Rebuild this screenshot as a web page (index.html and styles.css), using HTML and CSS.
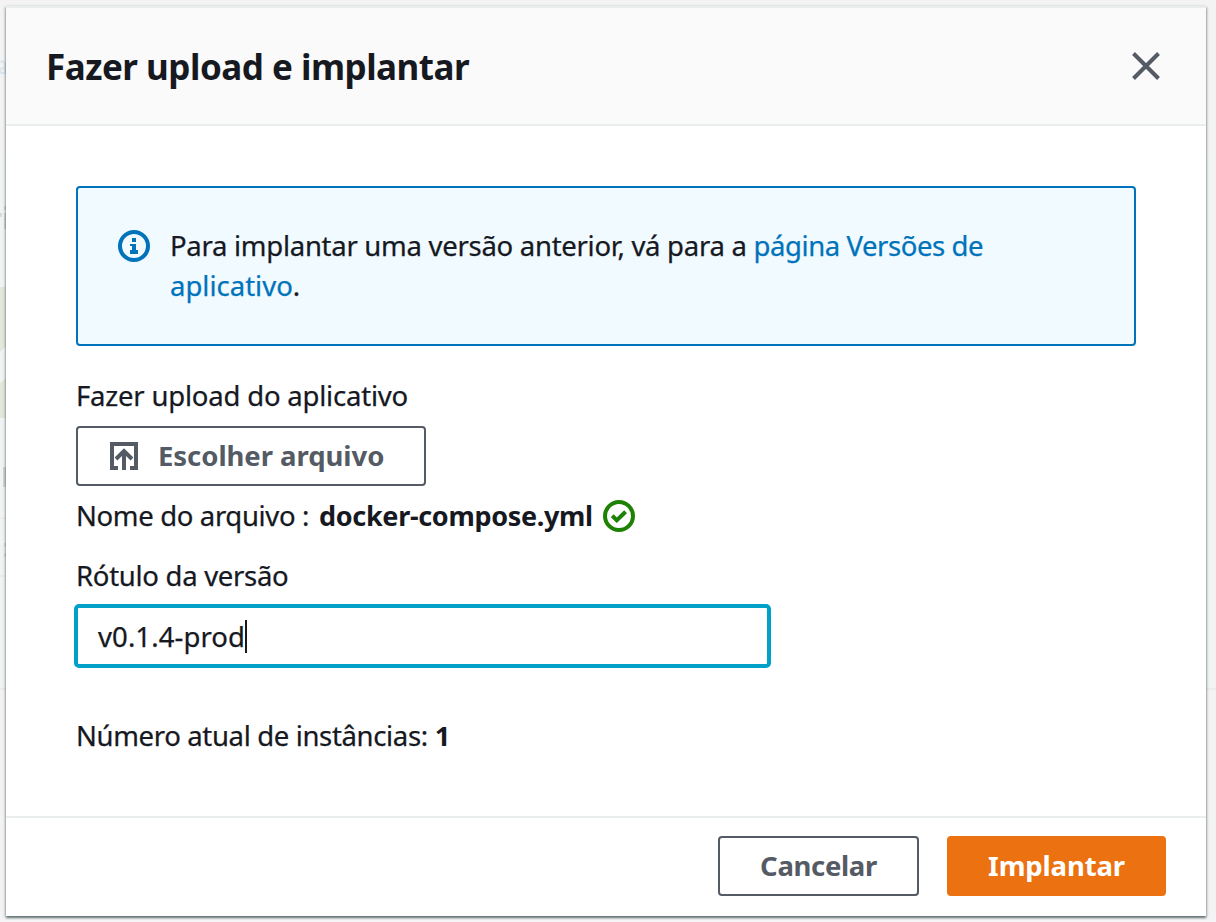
FILE: index.html
```html
<!DOCTYPE html>
<html lang="pt-BR">
<head>
<meta charset="utf-8">
<title>Fazer upload e implantar</title>
<link rel="stylesheet" href="styles.css">
</head>
<body>
<svg class="backdrop" viewBox="0 0 1216 922" aria-hidden="true">
  <rect y="156" width="1216" height="532" fill="#f2f4f4"/>
  <path d="M0 287h6v59l-6 6zM0 383l6-5v40H0z" fill="#e4e8db"/>
  <path d="M0 62q5-2 5 3v8H1q-3-5 4-5" fill="none" stroke="#dce5eb" stroke-width="2"/>
  <path d="M0 213h2v4H0zM4 206h2v4H4zM4 213h2v16H4z" fill="#d7d9da"/>
  <path d="M3 467h3v20H3z" fill="#d5d7d8"/>
  <path d="M0 518h6M0 576h6" stroke="#eeecec" stroke-width="2"/>
  <path d="M0 689h6M1206 689h10" stroke="#ebebeb" stroke-width="2"/>
  <path d="M4 543h2v4H4zM4 553h2v4H4z" fill="#dfdfe0"/>
</svg>
<main class="modal">
  <header class="modal-header">
    <h1 class="title">Fazer upload e implantar</h1>
    <svg class="close" viewBox="0 0 32 32"><path d="M3.5 3.5l25 25M28.5 3.5l-25 25"/></svg>
  </header>
  <section class="modal-body">
    <div class="alert">
      <svg class="info" viewBox="0 0 16 16"><circle cx="8" cy="8" r="7"/><path d="M7 4h2v2H7zM6 7h3v3h1v2H6v-2h1V8H6z"/></svg>
      <p class="alert-text"><span class="line-one">Para implantar uma versão anterior, vá para a <a class="link">página Versões de</a></span><br><a class="link line-two">aplicativo</a>.</p>
    </div>
    <div class="label upload-label">Fazer upload do aplicativo</div>
    <button class="button choose"><svg class="upload" viewBox="0 0 28 28"><path d="M8 26H2V2h24v24h-6M14 28V10M6 17l8-8 8 8"/></svg><span>Escolher arquivo</span></button>
    <div class="file-row"><span class="file-label">Nome do arquivo :</span><b class="file-name">docker-compose.yml</b><svg class="success" viewBox="0 0 16 16"><circle cx="8" cy="8" r="7"/><path d="M4.6 7.9l2.3 2.2 4.4-4.2"/></svg></div>
    <div class="label version-label">Rótulo da versão</div>
    <div class="input"><span class="value">v0.1.4-prod</span><i class="caret"></i></div>
    <div class="instances"><span class="instances-label">Número atual de instâncias:</span><b>1</b></div>
  </section>
  <footer class="modal-footer">
    <button class="button cancel">Cancelar</button>
    <button class="button primary">Implantar</button>
  </footer>
</main>
</body>
</html>
```

FILE: styles.css
```css
* { box-sizing: border-box; }
body { margin: 0; height: 922px; overflow: hidden; background: #f3f3f3; color: #16191f; font: 27.5px/40px "Noto Sans", sans-serif; padding: 6px 10px 6px 6px; }
.backdrop { position: absolute; left: 0; top: 0; width: 1216px; height: 922px; z-index: -1; }
.modal { width: 1200px; height: 910px; display: flex; flex-direction: column; background: #fff; border-top: 2px solid #eaeded; box-shadow: 0 2px 2px 0 rgba(0,28,36,.45), 1px 1px 3px 0 rgba(0,28,36,.2), -1px 1px 3px 0 rgba(0,28,36,.2); }
.modal-header { height: 118px; display: flex; align-items: center; justify-content: space-between; padding: 0 44px 0 40px; background: #fafafa; border-bottom: 2px solid #eaeded; }
.title { margin: 0; padding-top: 2px; font-size: 35px; line-height: 44px; font-weight: 700; letter-spacing: -.5px; }
.close { width: 32px; height: 32px; fill: none; stroke: #545b64; stroke-width: 4; }
.modal-body { flex: 1; padding: 60px 70px 0; }
.alert { height: 160px; display: flex; gap: 20px; padding: 38px 40px; border: 2px solid #0073bb; border-radius: 4px; background: #f1faff; }
.info { flex: none; width: 32px; height: 32px; margin-top: 4px; }
.info circle { fill: none; stroke: #0073bb; stroke-width: 2; }
.info path { fill: #0073bb; }
.alert-text { margin: 0; white-space: nowrap; }
.line-one { letter-spacing: -.28px; }
.link { color: #0073bb; }
.line-one .link { letter-spacing: -.42px; }
.alert-text, .label, .file-label, .value, .instances-label { -webkit-text-stroke: .25px; }
.label { height: 40px; letter-spacing: -.23px; white-space: nowrap; }
.upload-label { margin-top: 30px; letter-spacing: -.2px; }
.button { height: 60px; display: flex; align-items: center; justify-content: center; padding: 0; border: 2px solid #545b64; border-radius: 4px; background: #fff; color: #545b64; font: 700 27.5px/40px "Noto Sans", sans-serif; white-space: nowrap; }
.choose { width: 350px; margin-top: 10px; justify-content: flex-start; padding-left: 32px; gap: 20px; letter-spacing: -.05px; }
.upload { width: 28px; height: 28px; fill: none; stroke: #545b64; stroke-width: 4; }
.file-row { display: flex; align-items: center; height: 40px; margin-top: 10px; white-space: nowrap; }
.file-label { letter-spacing: -.35px; }
.file-name { margin-left: 10px; font-size: 27px; letter-spacing: -.32px; }
.success { width: 32px; height: 32px; margin-left: 10px; fill: none; stroke: #1d8102; stroke-width: 2; }
.version-label { margin-top: 20px; letter-spacing: -.29px; }
.input { width: 697px; height: 64px; display: flex; align-items: center; margin: 8px 0 0 -2px; padding-left: 20px; border: 4px solid #00a1c9; border-radius: 5px; }
.value { padding-top: 2px; letter-spacing: .1px; }
.caret { width: 2px; height: 33px; background: #16191f; }
.instances { display: flex; margin-top: 48px; white-space: nowrap; }
.instances-label { letter-spacing: -.35px; }
.instances b { margin-left: 7px; }
.modal-footer { height: 100px; display: flex; justify-content: flex-end; gap: 28px; padding: 18px 40px 0; border-top: 2px solid #eaeded; }
.cancel { width: 201px; letter-spacing: -.35px; }
.primary { width: 219px; border-color: #ec7211; background: #ec7211; color: #fff; letter-spacing: -.15px; }
```
